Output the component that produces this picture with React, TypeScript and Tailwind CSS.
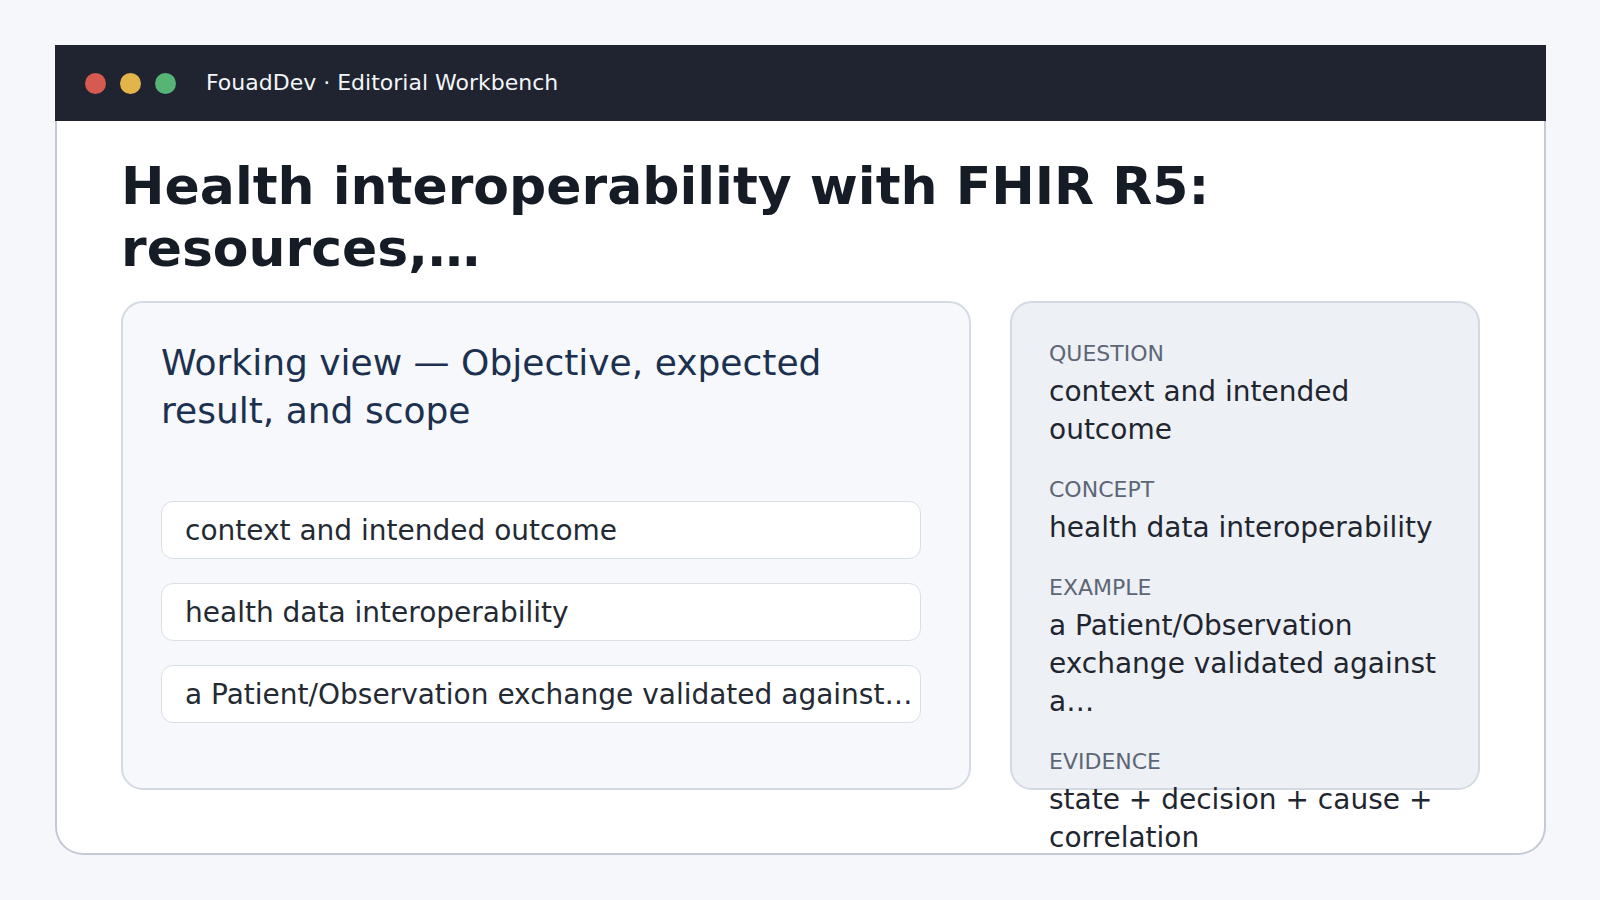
export default function App() {
  const items = [
    "context and intended outcome",
    "health data interoperability",
    "a Patient/Observation exchange validated against…",
  ];
  const facts = [
    { label: "QUESTION", value: "context and intended outcome" },
    { label: "CONCEPT", value: "health data interoperability" },
    { label: "EXAMPLE", value: "a Patient/Observation exchange validated against a…" },
    { label: "EVIDENCE", value: "state + decision + cause + correlation" },
  ];
  return (
    <div className="h-screen w-full bg-[#f5f7fa] pl-[55px] pr-[54px] py-[45px] font-['DejaVu_Sans',sans-serif]">
      <div className="flex h-full flex-col">
        <header className="flex h-[76px] shrink-0 items-center bg-[#1f2430] pl-[30px]">
          <div className="flex gap-[14px]">
            <span className="h-[21px] w-[21px] rounded-full bg-[#d65a50]" />
            <span className="h-[21px] w-[21px] rounded-full bg-[#e3b44a]" />
            <span className="h-[21px] w-[21px] rounded-full bg-[#56b575]" />
          </div>
          <span className="ml-[30px] text-[22px] leading-none text-[#f3f5f8]">
            FouadDev · Editorial Workbench
          </span>
        </header>
        <main className="flex min-h-0 flex-1 flex-col rounded-b-[28px] border-x-2 border-b-2 border-[#c3cad6] bg-white px-16 pt-[34px] pb-[63px]">
          <h1 className="mb-[21px] text-[52px] font-bold leading-[1.2] text-[#161c25]">
            Health interoperability with FHIR R5: resources,…
          </h1>
          <div className="grid min-h-0 flex-1 grid-cols-[1fr_470px] grid-rows-1 gap-[39px]">
            <section className="rounded-[22px] border-2 border-[#d3dae3] bg-[#f6f8fb] pl-[38px] pr-[48px] pt-9">
              <h2 className="text-[36px] leading-[48px] font-normal text-[#1c3150]">
                Working view — Objective, expected result, and scope
              </h2>
              <div className="mt-[66px] flex flex-col gap-[24px]">
                {items.map((t) => (
                  <div
                    key={t}
                    className="overflow-hidden whitespace-nowrap rounded-[12px] border border-[#d9dfe7] bg-white pt-[10px] pb-[8px] pl-[23px] pr-[2px] text-[28px] leading-[38px] text-[#242a33]"
                  >
                    {t}
                  </div>
                ))}
              </div>
            </section>
            <section className="flex flex-col gap-[26px] rounded-[22px] border-2 border-[#d3dae3] bg-[#edf0f5] pt-9 pl-[37px] pr-[36px]">
              {facts.map((f) => (
                <div key={f.label}>
                  <div className="mb-[4px] text-[22px] leading-[30px] text-[#5c6676]">{f.label}</div>
                  <div className="text-[28px] leading-[38px] text-[#1f2630]">{f.value}</div>
                </div>
              ))}
            </section>
          </div>
        </main>
      </div>
    </div>
  );
}
